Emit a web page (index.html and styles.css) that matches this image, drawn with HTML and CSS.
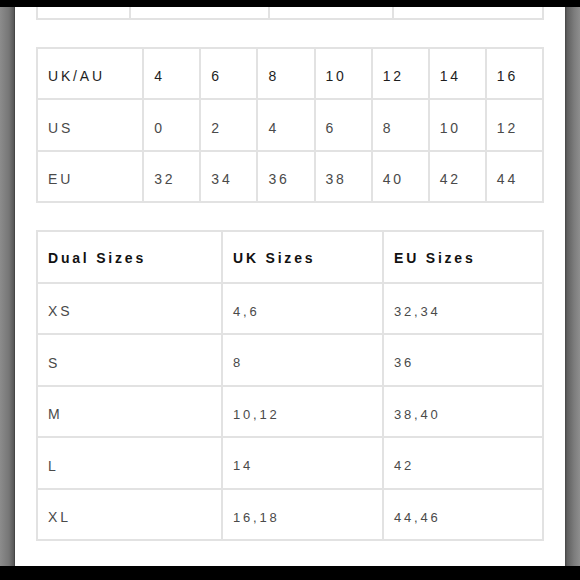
FILE: index.html
```html
<!DOCTYPE html>
<html lang="en">
<head>
<meta charset="utf-8">
<title>Size Guide</title>
<link rel="stylesheet" href="styles.css">
</head>
<body>
<div class="frame">
  <div class="bar-top"></div>
  <div class="middle">
    <div class="edge edge-left"></div>
    <div class="sheet">
      <table class="chart chart-top">
        <colgroup><col class="t1c1"><col class="t1c2"><col class="t1c3"><col></colgroup>
        <tr><td></td><td></td><td></td><td></td></tr>
      </table>

      <table class="chart chart-conv">
        <colgroup><col class="c-label"><col class="c-num"><col class="c-num"><col class="c-num"><col class="c-num"><col class="c-num"><col class="c-num"><col class="c-num"></colgroup>
        <tr class="row-strong"><td>UK/AU</td><td>4</td><td>6</td><td>8</td><td>10</td><td>12</td><td>14</td><td>16</td></tr>
        <tr><td>US</td><td>0</td><td>2</td><td>4</td><td>6</td><td>8</td><td>10</td><td>12</td></tr>
        <tr><td>EU</td><td>32</td><td>34</td><td>36</td><td>38</td><td>40</td><td>42</td><td>44</td></tr>
      </table>

      <table class="chart chart-dual">
        <colgroup><col class="d1"><col class="d2"><col></colgroup>
        <tr class="row-head"><th>Dual Sizes</th><th>UK Sizes</th><th>EU Sizes</th></tr>
        <tr><td>XS</td><td class="num">4,6</td><td class="num">32,34</td></tr>
        <tr><td>S</td><td class="num">8</td><td class="num">36</td></tr>
        <tr><td>M</td><td class="num">10,12</td><td class="num">38,40</td></tr>
        <tr><td>L</td><td class="num">14</td><td class="num">42</td></tr>
        <tr><td>XL</td><td class="num">16,18</td><td class="num">44,46</td></tr>
      </table>
    </div>
    <div class="edge edge-right"></div>
  </div>
  <div class="bar-bottom"></div>
</div>
</body>
</html>
```

FILE: styles.css
```css
html, body {
  margin: 0;
  padding: 0;
  background: #000;
}

.frame {
  width: 580px;
  height: 580px;
  display: flex;
  flex-direction: column;
  background: #000;
  overflow: hidden;
}

.bar-top {
  height: 7px;
  background: #000;
  flex: none;
}

.bar-bottom {
  height: 14px;
  background: #000;
  flex: none;
}

.middle {
  display: flex;
  height: 559px;
  flex: none;
}

.edge {
  width: 15px;
  flex: none;
}

.edge-left {
  background: linear-gradient(to right, #8c8c8c 0%, #767676 60%, #5a5a5a 90%, #3c3c3c 100%);
}

.edge-right {
  background: linear-gradient(to right, #454545 0%, #606060 15%, #7c7c7c 60%, #8e8e8e 100%);
}

.sheet {
  width: 550px;
  flex: none;
  background: #fff;
  overflow: hidden;
  padding-left: 21px;
  box-sizing: border-box;
}

.chart {
  border-collapse: collapse;
  table-layout: fixed;
  width: 508px;
  font-family: "Liberation Sans", Arial, Helvetica, sans-serif;
  font-size: 14px;
  letter-spacing: 2.8px;
  color: #4a4a4a;
}

.chart td,
.chart th {
  border: 2px solid #e2e2e2;
  height: 51.5px;
  box-sizing: border-box;
  padding: 6px 0 0 10px;
  text-align: left;
  vertical-align: middle;
  white-space: nowrap;
  font-weight: normal;
}

.chart-top {
  margin-top: -41px;
}

.t1c1 { width: 93px; }
.t1c2 { width: 139px; }
.t1c3 { width: 124px; }

.chart-conv {
  margin-top: 27px;
}

.c-label { width: 106px; }
.c-num { width: 57px; }

.row-strong td {
  color: #1e1e1e;
}

.chart-dual {
  margin-top: 27px;
}

.d1 { width: 185px; }
.d2 { width: 161px; }

.row-head th {
  font-weight: bold;
  color: #111;
  padding-top: 3px;
}

.chart-dual td.num {
  font-size: 13px;
}
```
